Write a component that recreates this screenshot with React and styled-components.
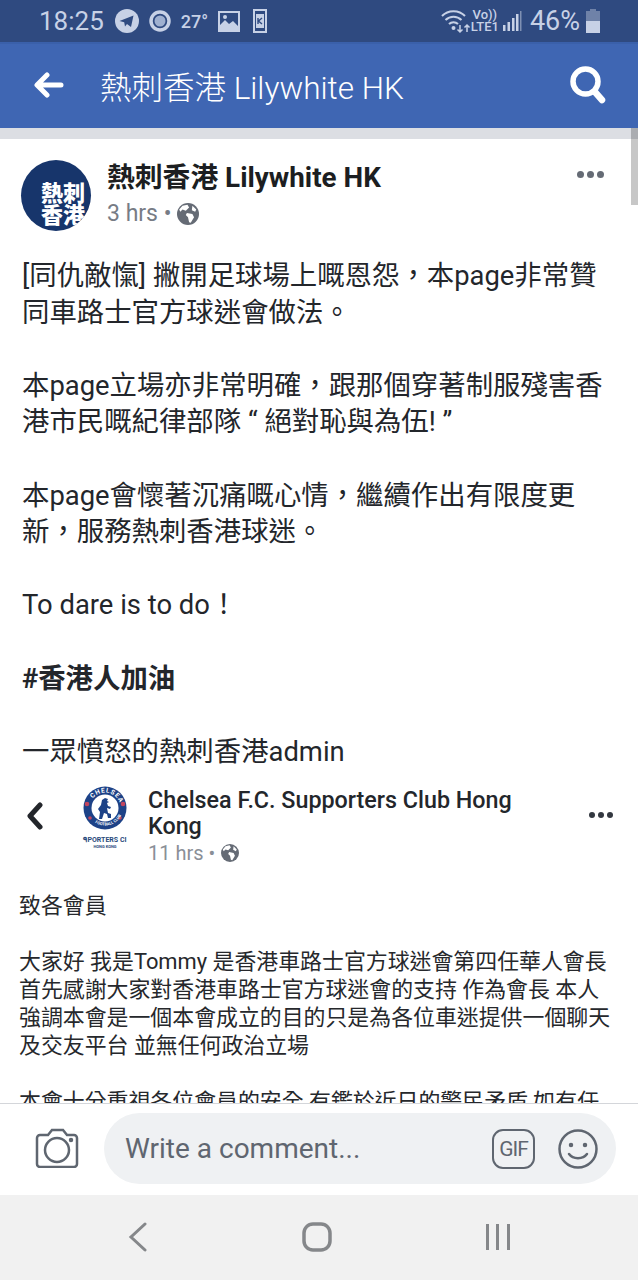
import React from 'react'
import styled, { createGlobalStyle } from 'styled-components'

const Global = createGlobalStyle`
  html, body { margin: 0; padding: 0; background: #fff; }
  body { font-family: Roboto, "Noto Sans CJK TC", sans-serif; }
`

const Screen = styled.div`
  width: 638px;
  height: 1280px;
  display: flex;
  flex-direction: column;
  overflow: hidden;
  position: relative;
  font-family: Roboto, "Noto Sans CJK TC", sans-serif;
  color: #1c1e21;
`

const StatusBar = styled.div`
  height: 42px;
  flex: none;
  box-sizing: border-box;
  padding: 0 38px 0 39px;
  background: #2f4a80;
  color: #c7d1e6;
  display: flex;
  align-items: center;
  justify-content: space-between;
`
const StatusGroup = styled.div`
  display: flex;
  align-items: center;
  gap: ${p => p.$gap}px;
`
const Clock = styled.span`
  font-size: 26px;
  margin-right: 1px;
`
const Temp = styled.span`
  font-size: 18px;
  font-weight: 500;
`
const KeySlot = styled.span`
  display: flex;
  margin-left: 3px;
`
const Battery = styled.span`
  font-size: 27px;
`
const Network = styled.span`
  display: flex;
  flex-direction: column;
  font-size: 13px;
  font-weight: 500;
  line-height: 12px;
  text-align: center;
`

const Header = styled.header`
  height: 86px;
  flex: none;
  box-sizing: border-box;
  border-top: 2px solid #3a60aa;
  background: #3f66b3;
  color: #fff;
  display: flex;
  align-items: center;
  padding: 0 32px 2px 34px;
`
const HeaderTitle = styled.div`
  flex: 1;
  margin-left: 36px;
  font-size: 31.500px;
  font-weight: 300;
`
const Divider = styled.div`
  height: 11px;
  flex: none;
  background: #dcdee3;
`
const Scrollbar = styled.div`
  position: absolute;
  right: 0;
  top: 128px;
  width: 7px;
  height: 77px;
  background: rgba(0, 0, 0, 0.22);
`

const Feed = styled.main`
  flex: 1;
  min-height: 0;
  overflow: hidden;
  background: #fff;
  padding: 21px 22px 0;
`
const PostHead = styled.div`
  display: flex;
  align-items: flex-start;
`
const Avatar = styled.div`
  width: 70px;
  height: 71px;
  flex: none;
  border-radius: 50%;
  margin-left: -1px;
  background: #17356b;
  color: #fff;
  font-size: 22px;
  font-weight: 900;
  line-height: 22px;
  box-sizing: border-box;
  padding: 23px 0 0 20px;
  overflow: hidden;
  white-space: nowrap;
`
const PostMeta = styled.div`
  flex: 1;
  margin-left: 16px;
  margin-top: 0;
`
const PostName = styled.div`
  font-size: 27.800px;
  font-weight: 700;
  line-height: 36px;
`
const When = styled.div`
  display: flex;
  align-items: center;
  gap: 6px;
  color: ${p => p.$small ? '#8a8f97' : '#777c85'};
  font-size: ${p => p.$small ? 20 : 23}px;
  line-height: 30px;
  margin-top: ${p => p.$small ? -1 : 3}px;
`
const Dots = styled.div`
  display: flex;
  gap: 3px;
  margin: ${p => p.$top}px ${p => p.$right}px 0 0;
`
const Dot = styled.i`
  width: ${p => p.$dark ? 6 : 7}px;
  height: ${p => p.$dark ? 6 : 7}px;
  border-radius: 50%;
  background: ${p => p.$dark ? '#333840' : '#656b75'};
`

const Body = styled.div`
  margin-top: 27px;
  font-size: 27.400px;
  line-height: 36.600px;
  white-space: pre-wrap;
  color: #23262b;
`
const Tag = styled.b`
  font-weight: 700;
`

const Shared = styled.section`
  margin: 14px 0 0 -3px;
`
const SharedHead = styled.div`
  display: flex;
  align-items: flex-start;
`
const BackSlot = styled.span`
  margin: 18px 0 0 7px;
`
const SharedLogo = styled.div`
  width: 50px;
  flex: none;
  margin: 2px 12px 0 36px;
  text-align: center;
  color: #2a4a7c;
`
const Crest = styled.svg`
  display: block;
  margin: 0 auto 6px;
`
const LogoLine = styled.div`
  font-size: ${p => p.$size}px;
  line-height: ${p => p.$size + 1}px;
  font-weight: 700;
  white-space: nowrap;
`
const SharedMeta = styled.div`
  flex: 1;
  margin-left: 6px;
  margin-top: 3px;
`
const SharedName = styled.div`
  font-size: 23.300px;
  font-weight: 500;
  line-height: 26px;
  color: #23262b;
  width: 410px;
`
const SharedBody = styled.div`
  margin-top: 24px;
  font-size: 21.900px;
  line-height: 27.900px;
  white-space: pre-wrap;
  color: #26282c;
`

const Composer = styled.div`
  height: 92px;
  flex: none;
  box-sizing: border-box;
  border-top: 1px solid #d4d6da;
  background: #fff;
  display: flex;
  align-items: flex-start;
  padding: 9px 22px 0 35px;
  gap: 25px;
`
const CameraSlot = styled.span`
  margin-top: 15px;
`
const CommentBox = styled.div`
  flex: 1;
  height: 71px;
  border-radius: 36px;
  background: #eff1f3;
  display: flex;
  align-items: center;
  padding: 0 18px 0 21px;
  color: #5f6670;
  font-size: 28px;
`
const Placeholder = styled.span`
  flex: 1;
`
const GifBadge = styled.span`
  width: 39px;
  height: 36px;
  border: 2px solid #5f6670;
  border-radius: 11px;
  display: flex;
  align-items: center;
  justify-content: center;
  font-size: 21px;
  letter-spacing: -1px;
  margin-right: 23px;
`

const NavBar = styled.nav`
  height: 85px;
  flex: none;
  box-sizing: border-box;
  background: #f1f1f1;
  display: flex;
  align-items: flex-start;
  justify-content: space-between;
  padding: 27px 127px 0 128px;
`

const Telegram = () => (
  <svg width="24" height="24" viewBox="0 0 24 24">
    <circle cx="12" cy="12" r="12" fill="#c7d1e6" />
    <path d="M4.5 12 18.5 6.5 16 18l-4-3-2 2.5-.8-4.3z" fill="#2f4a80" />
  </svg>
)
const RingIcon = () => (
  <svg width="22" height="24" viewBox="0 0 22 24">
    <circle cx="11" cy="12" r="9" fill="none" stroke="#c7d1e6" strokeWidth="3.5" />
    <circle cx="11" cy="12" r="5.5" fill="#9fb0d0" />
  </svg>
)
const PictureIcon = () => (
  <svg width="22" height="21" viewBox="0 0 22 21">
    <rect x="1" y="1" width="20" height="19" fill="none" stroke="#c7d1e6" strokeWidth="2" />
    <path d="M2 19v-5l5-5 4 4 4-3 5 5v4z" fill="#c7d1e6" />
    <circle cx="7" cy="6" r="2" fill="#c7d1e6" />
  </svg>
)
const KeyIcon = () => (
  <svg width="14" height="24" viewBox="0 0 14 24">
    <rect x="1" y="1" width="12" height="22" fill="#2f4a80" stroke="#c7d1e6" strokeWidth="2" />
    <rect x="3" y="5" width="8" height="14" fill="#c7d1e6" />
    <path d="M5 9v6M9 9 5.500 12 9 15" fill="none" stroke="#2f4a80" strokeWidth="1.4" />
  </svg>
)
const Wifi = () => (
  <svg width="30" height="26" viewBox="0 0 30 26" fill="none" stroke="#c7d1e6" strokeWidth="2">
    <path d="M1 8c6-6.500 17-6.500 23 0M4.500 12c4.500-4.500 11.500-4.500 16 0M8 16c2.500-2.500 6.500-2.500 9 0" />
    <circle cx="12.500" cy="20" r="1" fill="#c7d1e6" />
    <path d="M19 17v7M16.500 21.500 19 24l2.500-2.500M26 24v-7M23.500 19.500 26 17l2.500 2.500" strokeWidth="1.500" />
  </svg>
)
const Signal = () => (
  <svg width="19" height="22" viewBox="0 0 19 22" fill="#c7d1e6">
    <rect x="0" y="15" width="2.500" height="6" />
    <rect x="4.500" y="12" width="2.500" height="9" />
    <rect x="9" y="8" width="2.500" height="13" />
    <rect x="13" y="4" width="2.500" height="17" />
    <rect x="17" y="1" width="1.500" height="20" fill="#7f90b3" />
  </svg>
)
const BatteryIcon = () => (
  <svg width="14" height="24" viewBox="0 0 14 24">
    <path d="M4 0h6v2h4v22H0V2h4z" fill="#6f82a8" />
    <rect x="0" y="12" width="14" height="12" fill="#c7d1e6" />
  </svg>
)
const BackArrow = () => (
  <svg width="30" height="26" viewBox="0 0 30 26" fill="none" stroke="#fff" strokeWidth="5" strokeLinecap="round" strokeLinejoin="round">
    <path d="M27 13H4M13 3 3 13l10 10" />
  </svg>
)
const Search = () => (
  <svg width="36" height="38" viewBox="0 0 36 38" fill="none" stroke="#fff">
    <circle cx="15.500" cy="15.500" r="12.500" strokeWidth="5.500" />
    <path d="M25 26l7 8" strokeWidth="6.500" strokeLinecap="round" />
  </svg>
)
const Globe = ({ size }) => (
  <svg width={size} height={size} viewBox="0 0 20 20">
    <circle cx="10" cy="10" r="10" fill="#656b75" />
    <path d="M5 2.500 9.500 1.500 11 4 8 7 5 6 3 8 2 6zM9 9l5 1 1.500 3-3 5-1.500-.500L10 13 8 11zM14 2.500l3.500 3.500-1 2-3-1.500z" fill="#fff" />
  </svg>
)
const Chevron = () => (
  <svg width="18" height="28" viewBox="0 0 18 28" fill="none" stroke="#23262b" strokeWidth="5" strokeLinecap="round" strokeLinejoin="round">
    <path d="M14 3 4 14l10 11" />
  </svg>
)
const ChelseaCrest = () => (
  <Crest width="44" height="44" viewBox="0 0 44 44">
    <defs>
      <path id="crestTop" d="M6.500 22a15.500 15.500 0 0 1 31 0" />
      <path id="crestBottom" d="M4.500 25a17.800 17.800 0 0 0 35 0" />
    </defs>
    <circle cx="22" cy="22" r="21.500" fill="#1d4287" />
    <circle cx="22" cy="22" r="13.500" fill="#fff" />
    <path d="M16 33l1-7-2-3 3-4 1-5 3-2 3 1-1 2 2 1-2 1 1 3 3 1-1 2-3-1 1 5 3 1v4h-3l-1-4-3-1-2 6z" fill="#1d4287" />
    <circle cx="4" cy="18" r="2.300" fill="#c2455f" />
    <circle cx="40" cy="18" r="2.300" fill="#c2455f" />
    <circle cx="7" cy="32" r="1.800" fill="#c2455f" />
    <circle cx="37" cy="32" r="1.800" fill="#c2455f" />
    <text fontSize="6.500" fontWeight="700" fill="#fff" letterSpacing="0.8"><textPath href="#crestTop" startOffset="10">CHELSEA</textPath></text>
    <text fontSize="4" fontWeight="700" fill="#fff"><textPath href="#crestBottom" startOffset="14">FOOTBALL CLUB</textPath></text>
  </Crest>
)
const Camera = () => (
  <svg width="44" height="40" viewBox="0 0 44 40" fill="none" stroke="#5f6670" strokeWidth="2.500">
    <path d="M5 7h8l4-5h11l4 5h7a3 3 0 0 1 3 3v26a3 3 0 0 1-3 3H5a3 3 0 0 1-3-3V10a3 3 0 0 1 3-3z" />
    <circle cx="22" cy="22" r="12" />
    <circle cx="36" cy="12" r="1" fill="#5f6670" />
  </svg>
)
const Smile = () => (
  <svg width="40" height="40" viewBox="0 0 40 40" fill="none" stroke="#5f6670" strokeWidth="2.500">
    <circle cx="20" cy="20" r="18.500" />
    <circle cx="13" cy="16" r="1" fill="#5f6670" />
    <circle cx="27" cy="16" r="1" fill="#5f6670" />
    <path d="M11 25c4 5.500 14 5.500 18 0" strokeLinecap="round" />
  </svg>
)
const NavBack = () => (
  <svg width="20" height="30" viewBox="0 0 20 30" fill="none" stroke="#85878a" strokeWidth="3" strokeLinecap="round">
    <path d="M17 2 3 15l14 13" />
  </svg>
)
const NavHome = () => (
  <svg width="30" height="30" viewBox="0 0 30 30" fill="none" stroke="#85878a" strokeWidth="3.500">
    <rect x="2" y="2" width="26" height="26" rx="9" />
  </svg>
)
const NavRecent = () => (
  <svg width="26" height="30" viewBox="0 0 26 30" fill="#85878a">
    <rect x="1" y="2" width="3" height="26" />
    <rect x="11" y="2" width="3" height="26" />
    <rect x="22" y="2" width="3" height="26" />
  </svg>
)

const postText = `[同仇敵愾] 撇開足球場上嘅恩怨，本page非常贊
同車路士官方球迷會做法。

本page立場亦非常明確，跟那個穿著制服殘害香
港市民嘅紀律部隊 “ 絕對恥與為伍! ”

本page會懷著沉痛嘅心情，繼續作出有限度更
新，服務熱刺香港球迷。

To dare is to do！

`
const sharedText = `致各會員

大家好 我是Tommy 是香港車路士官方球迷會第四任華人會長
首先感謝大家對香港車路士官方球迷會的支持 作為會長 本人
強調本會是一個本會成立的目的只是為各位車迷提供一個聊天
及交友平台 並無任何政治立場

本會十分重視各位會員的安全 有鑑於近日的警民矛盾 如有任`

const ThreeDots = ({ top, right, dark }) => (
  <Dots $top={top} $right={right}>
    <Dot $dark={dark} /><Dot $dark={dark} /><Dot $dark={dark} />
  </Dots>
)

export default function App() {
  return (
    <Screen>
      <Global />
      <StatusBar>
        <StatusGroup $gap={10}>
          <Clock>18:25</Clock>
          <Telegram />
          <RingIcon />
          <Temp>27°</Temp>
          <PictureIcon />
          <KeySlot><KeyIcon /></KeySlot>
        </StatusGroup>
        <StatusGroup $gap={8}>
          <StatusGroup $gap={4}>
            <StatusGroup $gap={0}>
              <Wifi />
              <Network><span>Vo))</span><span>LTE1</span></Network>
            </StatusGroup>
            <Signal />
          </StatusGroup>
          <StatusGroup $gap={6}>
            <Battery>46%</Battery>
            <BatteryIcon />
          </StatusGroup>
        </StatusGroup>
      </StatusBar>
      <Header>
        <BackArrow />
        <HeaderTitle>熱刺香港 Lilywhite HK</HeaderTitle>
        <Search />
      </Header>
      <Divider />
      <Scrollbar />
      <Feed>
        <PostHead>
          <Avatar>熱刺<br />香港</Avatar>
          <PostMeta>
            <PostName>熱刺香港 Lilywhite HK</PostName>
            <When>3 hrs • <Globe size={22} /></When>
          </PostMeta>
          <ThreeDots top={11} right={12} />
        </PostHead>
        <Body>
          {postText}
          <Tag>#香港人加油</Tag>
          {'\n\n一眾憤怒的熱刺香港admin'}
        </Body>
        <Shared>
          <SharedHead>
            <BackSlot><Chevron /></BackSlot>
            <SharedLogo>
              <ChelseaCrest />
              <LogoLine $size={7}>ᑫPORTERS CI</LogoLine>
              <LogoLine $size={4}>HONG KONG</LogoLine>
            </SharedLogo>
            <SharedMeta>
              <SharedName>Chelsea F.C. Supporters Club Hong Kong</SharedName>
              <When $small>11 hrs • <Globe size={18} /></When>
            </SharedMeta>
            <ThreeDots top={28} right={3} dark />
          </SharedHead>
          <SharedBody>{sharedText}</SharedBody>
        </Shared>
      </Feed>
      <Composer>
        <CameraSlot><Camera /></CameraSlot>
        <CommentBox>
          <Placeholder>Write a comment...</Placeholder>
          <GifBadge>GIF</GifBadge>
          <Smile />
        </CommentBox>
      </Composer>
      <NavBar>
        <NavBack />
        <NavHome />
        <NavRecent />
      </NavBar>
    </Screen>
  )
}
